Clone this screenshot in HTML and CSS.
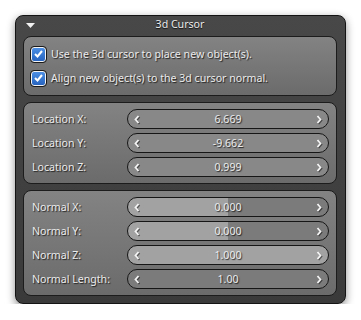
FILE: index.html
```html
<!DOCTYPE html>
<html lang="en">
<head>
    <meta charset="utf-8">
    <link rel="stylesheet" href="styles.css">
    <title>3d Cursor</title>
</head>
<body>
<div class="panel">
    <div class="panel-header">
        <svg class="toggle" width="9" height="6" viewBox="0 0 9 6"><polygon points="0,0 9,0 4.5,5" fill="#f2f2f2"/></svg>
        <span class="title">3d Cursor</span>
    </div>

    <div class="box">
        <label class="check-row">
            <span class="checkbox"><svg width="9" height="8" viewBox="0 0 9 8"><polyline points="1,4 3.5,6.5 8,1" fill="none" stroke="#fff" stroke-width="2"/></svg></span>
            <span class="text">Use the 3d cursor to place new object(s).</span>
        </label>
        <label class="check-row">
            <span class="checkbox"><svg width="9" height="8" viewBox="0 0 9 8"><polyline points="1,4 3.5,6.5 8,1" fill="none" stroke="#fff" stroke-width="2"/></svg></span>
            <span class="text">Align new object(s) to the 3d cursor normal.</span>
        </label>
    </div>

    <div class="box fields">
        <span class="text">Location X:</span>
        <div class="number"><svg class="arrow" viewBox="0 0 6 9"><polyline points="4.5,1 1.5,4.5 4.5,8"/></svg><span class="value">6.669</span><svg class="arrow" viewBox="0 0 6 9"><polyline points="1.5,1 4.5,4.5 1.5,8"/></svg></div>
        <span class="text">Location Y:</span>
        <div class="number"><svg class="arrow" viewBox="0 0 6 9"><polyline points="4.5,1 1.5,4.5 4.5,8"/></svg><span class="value">-9.662</span><svg class="arrow" viewBox="0 0 6 9"><polyline points="1.5,1 4.5,4.5 1.5,8"/></svg></div>
        <span class="text">Location Z:</span>
        <div class="number"><svg class="arrow" viewBox="0 0 6 9"><polyline points="4.5,1 1.5,4.5 4.5,8"/></svg><span class="value">0.999</span><svg class="arrow" viewBox="0 0 6 9"><polyline points="1.5,1 4.5,4.5 1.5,8"/></svg></div>
    </div>

    <div class="box fields">
        <span class="text">Normal X:</span>
        <div class="number slider" style="--fill: 50%"><svg class="arrow" viewBox="0 0 6 9"><polyline points="4.5,1 1.5,4.5 4.5,8"/></svg><span class="value">0.000</span><svg class="arrow" viewBox="0 0 6 9"><polyline points="1.5,1 4.5,4.5 1.5,8"/></svg></div>
        <span class="text">Normal Y:</span>
        <div class="number slider" style="--fill: 50%"><svg class="arrow" viewBox="0 0 6 9"><polyline points="4.5,1 1.5,4.5 4.5,8"/></svg><span class="value">0.000</span><svg class="arrow" viewBox="0 0 6 9"><polyline points="1.5,1 4.5,4.5 1.5,8"/></svg></div>
        <span class="text">Normal Z:</span>
        <div class="number slider" style="--fill: 100%"><svg class="arrow" viewBox="0 0 6 9"><polyline points="4.5,1 1.5,4.5 4.5,8"/></svg><span class="value">1.000</span><svg class="arrow" viewBox="0 0 6 9"><polyline points="1.5,1 4.5,4.5 1.5,8"/></svg></div>
        <span class="text">Normal Length:</span>
        <div class="number slider" style="--fill: 0%"><svg class="arrow" viewBox="0 0 6 9"><polyline points="4.5,1 1.5,4.5 4.5,8"/></svg><span class="value">1.00</span><svg class="arrow" viewBox="0 0 6 9"><polyline points="1.5,1 4.5,4.5 1.5,8"/></svg></div>
    </div>
</div>
</body>
</html>
```

FILE: styles.css
```css
body {
    margin: 0;
    background-color: white;
    font-family: "Noto Sans", "DejaVu Sans", sans-serif;
    font-size: 10.6px;
    color: #ececec;
}

.panel {
    box-sizing: border-box;
    width: 331px;
    height: 289px;
    margin: 15px 0 0 15px;
    padding: 0 8px 7px 7px;
    border: 1px solid #141414;
    border-radius: 8px;
    background: linear-gradient(#484848, #3a3a3a);
    box-shadow: 0 3px 8px rgba(0, 0, 0, 0.45);
    display: flex;
    flex-direction: column;
    gap: 5px;
}

.panel-header {
    height: 21px;
    display: flex;
    align-items: center;
    justify-content: center;
    position: relative;
}

.toggle {
    position: absolute;
    left: 3px;
    top: 7px;
}

.title {
    text-shadow: 0 1px 1px rgba(0, 0, 0, 0.8);
}

.box {
    border: 1px solid #1c1c1c;
    border-radius: 8px;
    background: linear-gradient(#838383, #6b6b6b);
    padding: 5px 7px;
}

.box + .box {
    margin-top: 1px;
}

.text {
    text-shadow: 1px 1px 1px rgba(0, 0, 0, 0.75);
    white-space: nowrap;
}

.check-row {
    height: 24px;
    display: flex;
    align-items: center;
    gap: 5px;
}

.checkbox {
    box-sizing: border-box;
    width: 15px;
    height: 15px;
    border: 1px solid #f4f4f4;
    outline: 1px solid #1a1a1a;
    border-radius: 3px;
    background: linear-gradient(#4b8ee4, #2764c0);
    display: flex;
    align-items: center;
    justify-content: center;
}

.fields {
    display: grid;
    grid-template-columns: 95px 202px;
    row-gap: 4px;
    padding: 6px 7px 6px 8px;
    align-items: center;
}

.number {
    box-sizing: border-box;
    height: 20px;
    border: 1px solid #161616;
    border-radius: 10px;
    background-color: #888888;
    display: flex;
    align-items: center;
    padding: 0 6px;
}

.slider {
    background: linear-gradient(to right, #a2a2a2 var(--fill), #7b7b7b var(--fill));
}

.arrow {
    width: 6px;
    height: 9px;
    fill: none;
    stroke: #f4f4f4;
    stroke-width: 1.8;
    filter: drop-shadow(1px 1px 0 rgba(0, 0, 0, 0.45));
}

.value {
    flex: 1;
    text-align: center;
    text-shadow: 1px 1px 1px rgba(0, 0, 0, 0.75);
}
```
